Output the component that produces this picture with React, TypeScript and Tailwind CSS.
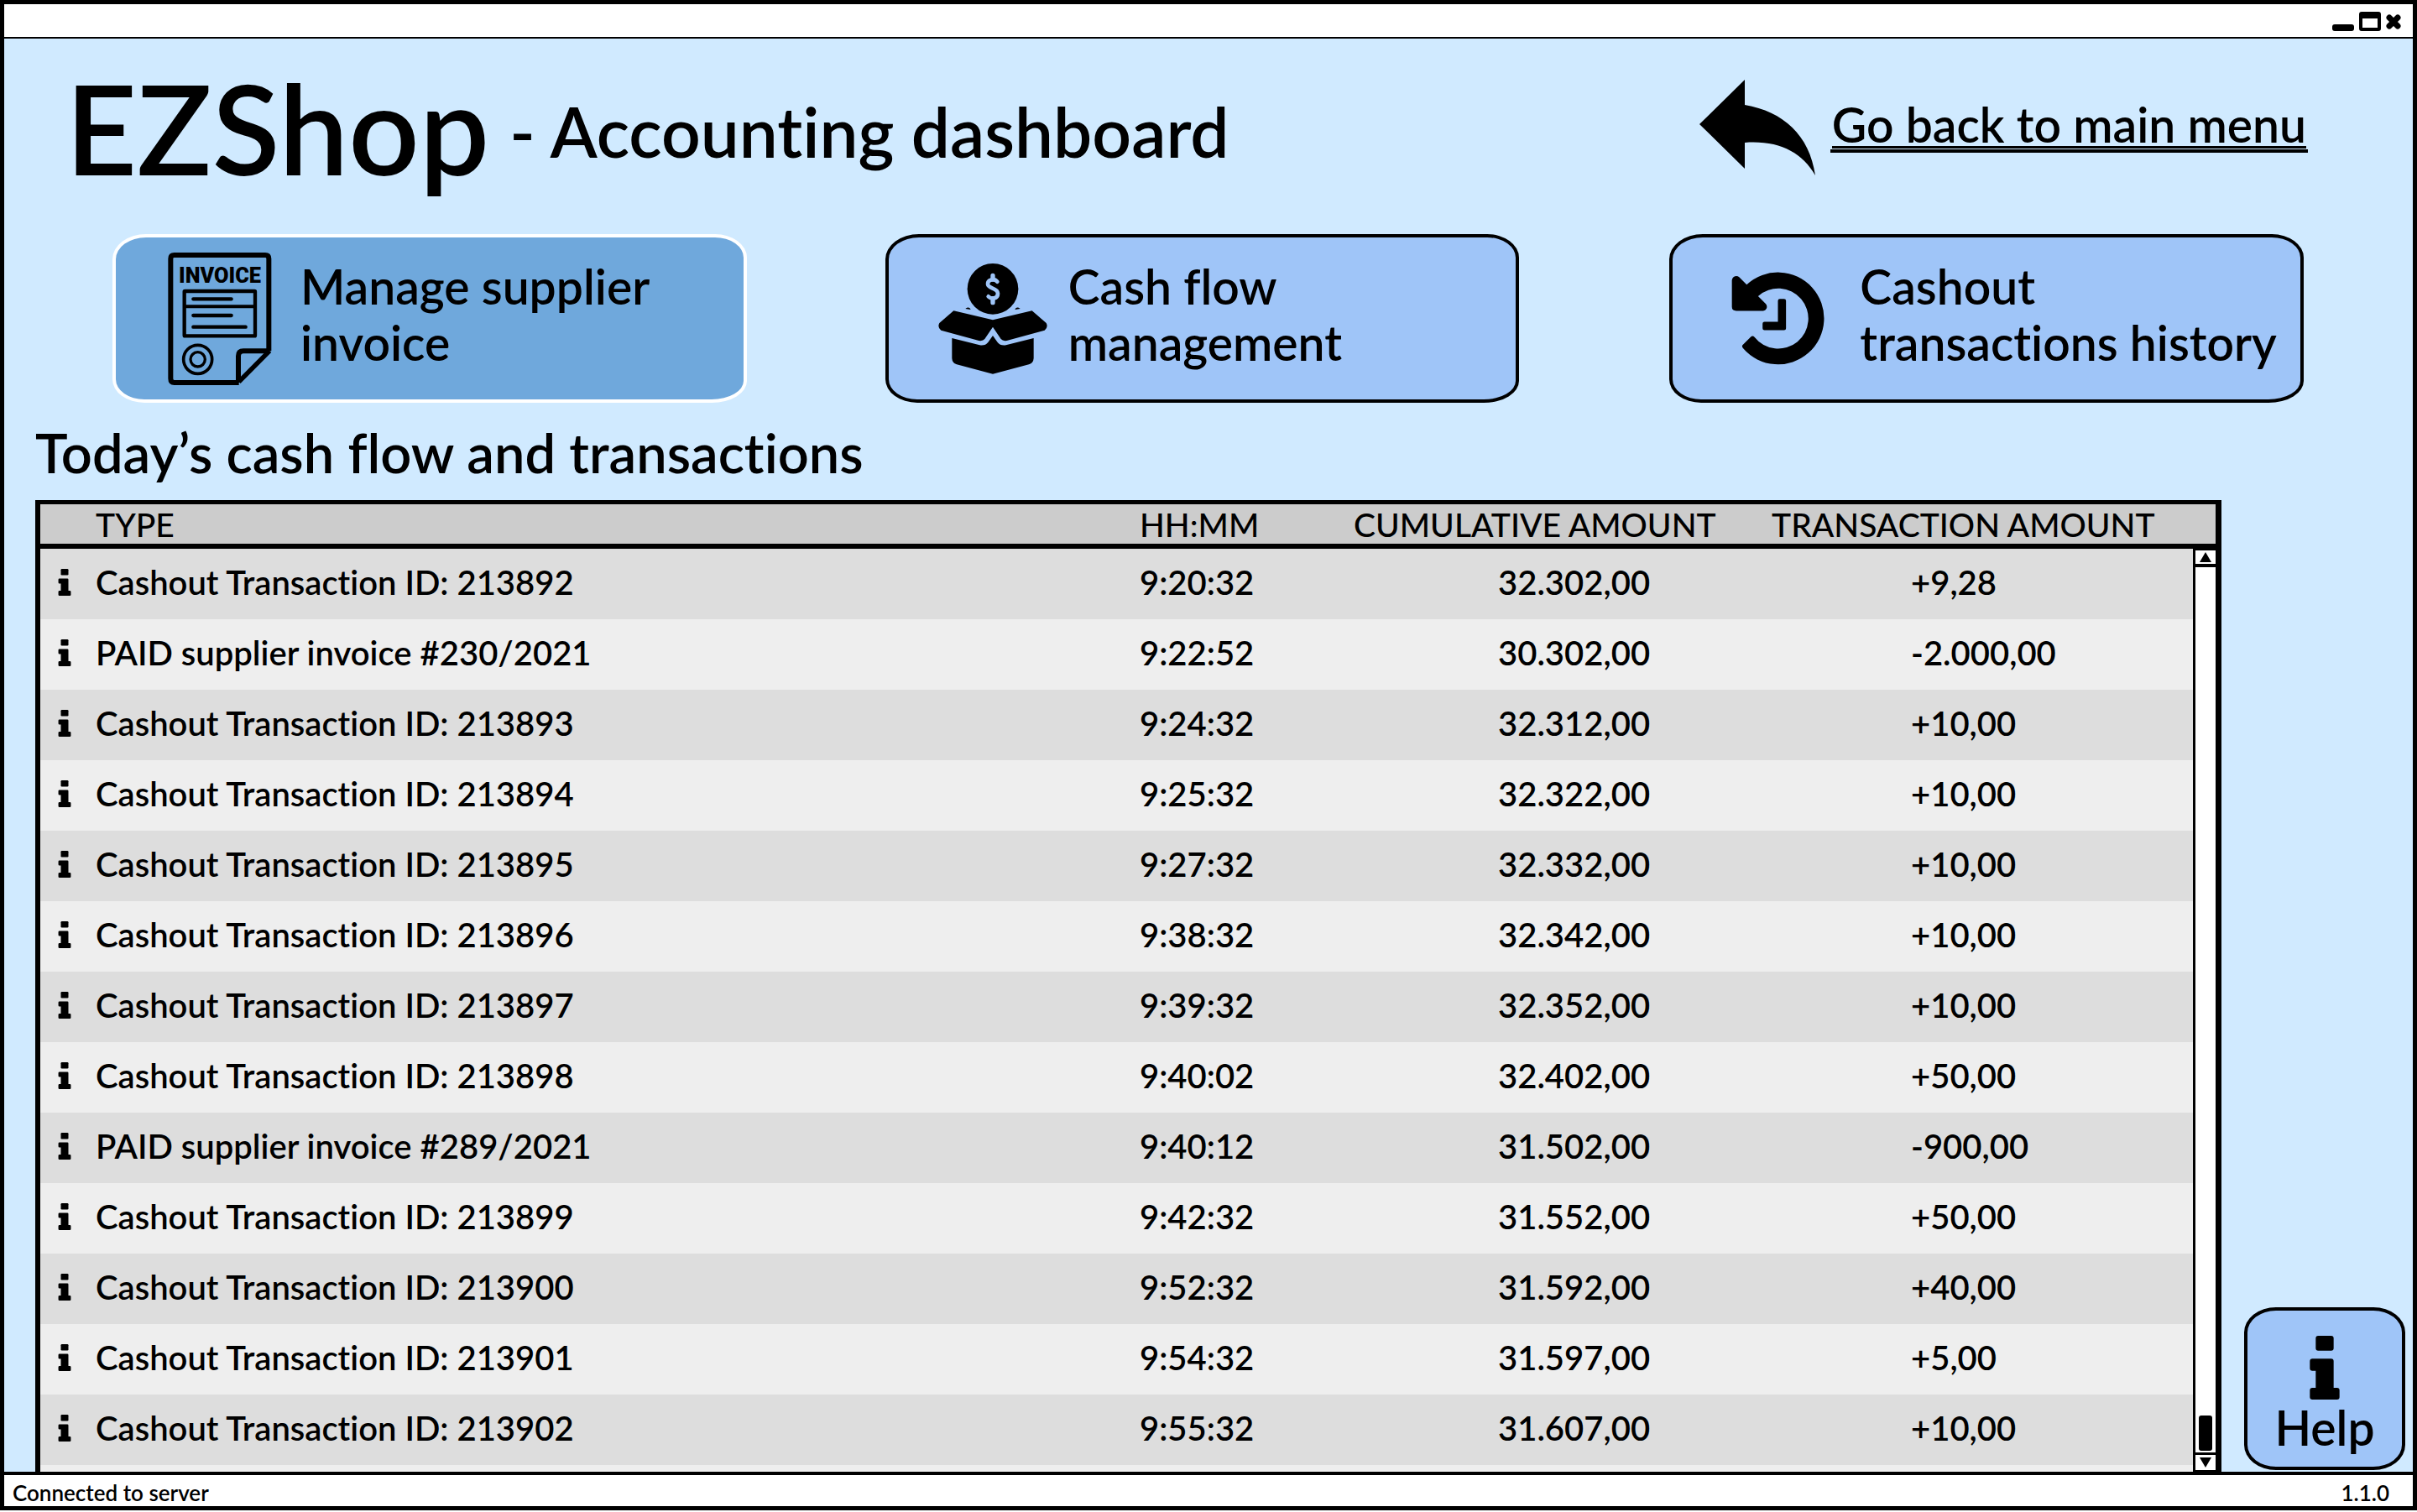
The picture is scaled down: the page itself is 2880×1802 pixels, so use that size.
import type { ReactNode } from "react";

type Row = { label: string; time: string; total: string; amount: string };

const rows: Row[] = [
  { label: "Cashout Transaction ID: 213892", time: "9:20:32", total: "32.302,00", amount: "+9,28" },
  { label: "PAID supplier invoice #230/2021", time: "9:22:52", total: "30.302,00", amount: "-2.000,00" },
  { label: "Cashout Transaction ID: 213893", time: "9:24:32", total: "32.312,00", amount: "+10,00" },
  { label: "Cashout Transaction ID: 213894", time: "9:25:32", total: "32.322,00", amount: "+10,00" },
  { label: "Cashout Transaction ID: 213895", time: "9:27:32", total: "32.332,00", amount: "+10,00" },
  { label: "Cashout Transaction ID: 213896", time: "9:38:32", total: "32.342,00", amount: "+10,00" },
  { label: "Cashout Transaction ID: 213897", time: "9:39:32", total: "32.352,00", amount: "+10,00" },
  { label: "Cashout Transaction ID: 213898", time: "9:40:02", total: "32.402,00", amount: "+50,00" },
  { label: "PAID supplier invoice #289/2021", time: "9:40:12", total: "31.502,00", amount: "-900,00" },
  { label: "Cashout Transaction ID: 213899", time: "9:42:32", total: "31.552,00", amount: "+50,00" },
  { label: "Cashout Transaction ID: 213900", time: "9:52:32", total: "31.592,00", amount: "+40,00" },
  { label: "Cashout Transaction ID: 213901", time: "9:54:32", total: "31.597,00", amount: "+5,00" },
  { label: "Cashout Transaction ID: 213902", time: "9:55:32", total: "31.607,00", amount: "+10,00" },
];

function InfoIcon({ className }: { className: string }) {
  return (
    <svg viewBox="0 0 106 228" className={className} aria-hidden="true">
      <rect x="21" y="0" width="64" height="53" rx="9" />
      <path d="M9 82H76Q85 82 85 91V186H97Q106 186 106 195V219Q106 228 97 228H9Q0 228 0 219V195Q0 186 9 186H21V125H9Q0 125 0 116V91Q0 82 9 82Z" />
    </svg>
  );
}

function InvoiceIcon() {
  return (
    <svg viewBox="60 60 372 474" className="h-[158px] w-[124px] shrink-0" fill="none" stroke="black" aria-hidden="true">
      <path d="M421 412V82Q421 69 408 69H83Q70 69 70 82V511Q70 525 83 525H314" strokeWidth="18" strokeLinejoin="round" />
      <path d="M421 412H330Q312 412 312 430V525" strokeWidth="18" />
      <path d="M314 522L424 411" strokeWidth="16" />
      <text x="246" y="168" textAnchor="middle" fill="black" stroke="none" className="font-[Roboto] text-[76px] font-black">
        INVOICE
      </text>
      <rect x="119" y="198" width="253" height="160" strokeWidth="13" rx="2" />
      <path d="M119 253H372" strokeWidth="12" />
      <path d="M151 226H287M151 285H287M151 326H338" strokeWidth="13" strokeLinecap="round" />
      <circle cx="167" cy="442" r="51" strokeWidth="11" />
      <circle cx="167" cy="442" r="26" strokeWidth="10" />
    </svg>
  );
}

function CashBoxIcon() {
  return (
    <svg viewBox="48 39 390 396" className="h-[132px] w-[130px] shrink-0" aria-hidden="true">
      <circle cx="243" cy="130" r="91" />
      <path d="M243 82V96M243 164V179" stroke="#9fc5f8" strokeWidth="16" strokeLinecap="round" />
      <path d="M259 104C248 91 224 96 225 113C226 130 261 126 261 146C261 166 238 168 227 157" fill="none" stroke="#9fc5f8" strokeWidth="14" strokeLinecap="round" />
      <path d="M145 201Q158 191 164 204ZM341 201Q328 191 322 204Z" />
      <path d="M103 208L243 241L383 208L434 252Q442 268 428 278L293 315Q278 317 272 309L243 266L214 309Q208 317 193 315L58 278Q44 268 52 252Z" />
      <path d="M97 306L196 331Q216 334 226 321L243 297L260 321Q270 334 290 331L389 306V378Q388 395 372 400L243 434L114 400Q98 395 97 378Z" />
    </svg>
  );
}

function HistoryIcon() {
  return (
    <svg viewBox="66 76 334 334" className="h-[111px] w-[111px] shrink-0" aria-hidden="true">
      <path d="M121 122A165 165 0 1 1 108 350Q102 343 107 338L135 310Q142 303 149 310A108 108 0 1 0 162 163L189 190Q196 197 192 208Q188 216 180 216H84Q68 216 68 202V106Q70 92 83 91Q90 91 94 95Z" />
      <path d="M240 173H255Q262 173 262 180V278Q262 285 255 285H185Q178 285 178 278V262Q178 255 185 255H233V180Q233 173 240 173Z" />
    </svg>
  );
}

function ActionButton({ active, className, icon, children }: { active?: boolean; className: string; icon: ReactNode; children: ReactNode }) {
  const tone = active ? "border-white bg-[#6fa8dc]" : "border-black bg-[#9fc5f8]";
  return (
    <button type="button" className={`flex h-[201px] grow basis-1/4 items-center rounded-[40px_38px_42px_38px/30px_28px_26px_28px] border-4 text-left ${tone} ${className}`}>
      {icon}
      <span className="pb-2.5 text-[57px] leading-[67px] whitespace-nowrap">{children}</span>
    </button>
  );
}

export default function App() {
  return (
    <div className="flex flex-col border-[5px] border-black bg-[#d0eaff] font-[Lato,sans-serif] text-[40px] font-semibold text-black [font-variant-ligatures:no-common-ligatures]">
      <div className="flex h-[41px] items-center justify-end gap-1.5 border-b-2 border-black bg-white pr-3.5">
        <button type="button" aria-label="Minimize">
          <svg viewBox="0 0 26 24" className="h-6 w-[26px]"><rect y="16" width="26" height="8" rx="3" /></svg>
        </button>
        <button type="button" aria-label="Maximize">
          <svg viewBox="0 0 26 24" className="h-6 w-[26px]"><path fillRule="evenodd" d="M3 1H23Q26 1 26 4V21Q26 24 23 24H3Q0 24 0 21V4Q0 1 3 1ZM4 9V20H22V9Z" /></svg>
        </button>
        <button type="button" aria-label="Close">
          <svg viewBox="0 0 18 24" className="h-6 w-[18px]"><path d="M4 8L14 18M14 8L4 18" stroke="black" strokeWidth="7" strokeLinecap="round" /></svg>
        </button>
      </div>

      <header className="flex items-center justify-between pt-[34px] pr-[125px] pl-[73px]">
        <h1 className="flex items-center gap-6 whitespace-nowrap">
          <span className="text-[148px] leading-[144px]">EZShop</span>
          <span className="pt-2 text-[82px] leading-[82px]">- Accounting dashboard</span>
        </h1>
        <a href="#main-menu" className="flex items-center gap-[18px]">
          <svg viewBox="0 0 138 114" className="h-[114px] w-[138px]" aria-hidden="true">
            <path d="M0 53L54 0V30C100 38 131 66 138 114C122 86 94 72 54 75V106Z" />
          </svg>
          <span className="border-b-4 border-black px-0.5 pb-px">
            <span className="block border-b-[3px] border-black text-[57px] leading-[52px] whitespace-nowrap">Go back to main menu</span>
          </span>
        </a>
      </header>

      <nav className="mt-[55px] flex pr-[130px] pl-[129px]">
        <ActionButton active className="gap-[34px] pl-[62px]" icon={<InvoiceIcon />}>
          Manage supplier<br />invoice
        </ActionButton>
        <ActionButton className="ml-[165px] gap-[25px] pl-[59px]" icon={<CashBoxIcon />}>
          Cash flow<br />management
        </ActionButton>
        <ActionButton className="ml-[179px] gap-[42px] pl-[70px]" icon={<HistoryIcon />}>
          Cashout<br />transactions history
        </ActionButton>
      </nav>

      <h2 className="mt-[25px] pl-[37px] text-[65px] leading-[68px]">Today’s cash flow and transactions</h2>

      <main className="mt-[23px] flex items-end gap-[27px] pr-[9px] pl-[37px]">
        <div className="flex flex-1 border-t-[5px] border-r-[7px] border-l-[6px] border-black bg-[#eeeeee]">
          <table className="mb-2 flex-1 table-fixed border-collapse text-left leading-[47px]">
            <colgroup>
              <col className="w-[66px]" />
              <col />
              <col className="w-[255px]" />
              <col className="w-[498px]" />
              <col className="w-[502px]" />
            </colgroup>
            <thead>
              <tr className="h-[53px] bg-[#cccccc] text-[39px] shadow-[inset_0_-6px_0_black] [&>th]:p-0 [&>th]:pb-1 [&>th]:font-medium [&>th]:whitespace-nowrap">
                <th aria-label="Details" />
                <th>TYPE</th>
                <th>HH:MM</th>
                <th>CUMULATIVE AMOUNT</th>
                <th>TRANSACTION AMOUNT</th>
              </tr>
            </thead>
            <tbody>
              {rows.map((row) => (
                <tr key={row.label} className="h-[84px] odd:bg-[#dddddd] even:bg-[#eeeeee] [&>td]:p-0 [&>td]:pb-1 [&>td]:whitespace-nowrap">
                  <td>
                    <button type="button" aria-label={`Details of ${row.label}`} className="block pl-[21px]">
                      <InfoIcon className="h-8 w-4" />
                    </button>
                  </td>
                  <td>{row.label}</td>
                  <td>{row.time}</td>
                  <td><span className="pl-[172px]">{row.total}</span></td>
                  <td><span className="pl-[166px]">{row.amount}</span></td>
                </tr>
              ))}
            </tbody>
          </table>
          <div className="flex w-[27px] flex-col">
            <div className="h-[53px] border-b-[6px] border-black bg-[#cccccc]" />
            <div className="flex flex-1 flex-col border-t-2 border-b-2 border-l-[3px] border-black bg-white">
              <button type="button" aria-label="Scroll up" className="flex h-5 items-center justify-center border-b-4 border-black">
                <svg viewBox="0 0 14 12" className="h-3 w-3.5"><path d="M7 0L14 12H0Z" /></svg>
              </button>
              <div className="flex flex-1 flex-col items-center justify-end pb-0.5">
                <div className="h-[42px] w-4 rounded-[3px] bg-black" />
              </div>
              <button type="button" aria-label="Scroll down" className="flex h-[21px] items-center justify-center border-t-[3px] border-black">
                <svg viewBox="0 0 14 12" className="h-3 w-3.5"><path d="M0 0H14L7 12Z" /></svg>
              </button>
            </div>
          </div>
        </div>
        <button type="button" className="mb-0.5 flex h-[194px] w-[192px] flex-col items-center rounded-[38px/30px] border-4 border-black bg-[#9fc5f8] pt-[30px]">
          <InfoIcon className="h-[76px] w-9" />
          <span className="text-[57px] leading-[67px]">Help</span>
        </button>
      </main>

      <footer className="flex h-[41px] items-center justify-between border-t-4 border-black bg-white pt-1 pr-7 pl-2.5 text-[26px] leading-[32px]">
        <span>Connected to server</span>
        <span>1.1.0</span>
      </footer>
    </div>
  );
}
